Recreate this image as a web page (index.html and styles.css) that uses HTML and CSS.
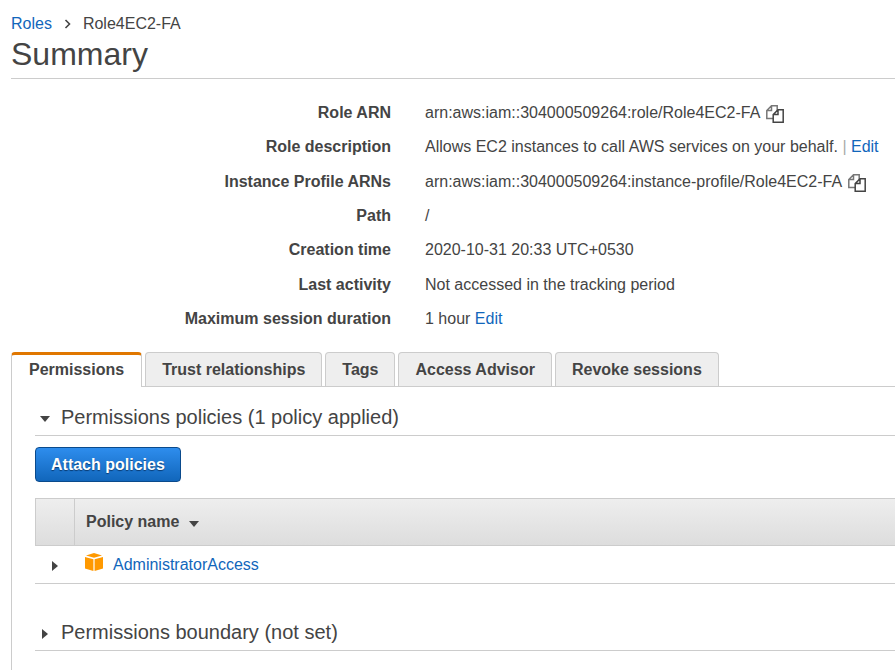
FILE: index.html
```html
<!DOCTYPE html>
<html lang="en">
<head>
<meta charset="utf-8">
<title>Role4EC2-FA</title>
<link rel="stylesheet" href="styles.css">
</head>
<body>
<svg class="defs" aria-hidden="true">
  <symbol id="copy" viewBox="0 0 18 18">
    <path d="M5.5 .8H11.2V13.5H.8V5.5Z M5.5 .8V5.5H.8" fill="#fff" stroke="#777" stroke-width="1.5"/>
    <path d="M12 4.8H17.2V17.2H7.2V9.6Z M12 4.8V9.6H7.2" fill="#fff" stroke="#444" stroke-width="1.5"/>
  </symbol>
</svg>
<header class="page-header">
  <nav class="breadcrumb" aria-label="Breadcrumb">
    <a href="#">Roles</a>
    <svg class="chevron" viewBox="0 0 6 10" aria-hidden="true"><path d="M1 1L5 5L1 9" fill="none" stroke="#444" stroke-width="1.6"/></svg>
    <span>Role4EC2-FA</span>
  </nav>
  <h1>Summary</h1>
</header>
<main>
  <dl class="details">
    <dt>Role ARN</dt>
    <dd>arn:aws:iam::304000509264:role/Role4EC2-FA<button class="copy" aria-label="Copy role ARN"><svg><use href="#copy"/></svg></button></dd>
    <dt>Role description</dt>
    <dd>Allows EC2 instances to call AWS services on your behalf. <span class="bar">|</span> <a href="#">Edit</a></dd>
    <dt>Instance Profile ARNs</dt>
    <dd>arn:aws:iam::304000509264:instance-profile/Role4EC2-FA<button class="copy" aria-label="Copy instance profile ARN"><svg><use href="#copy"/></svg></button></dd>
    <dt>Path</dt>
    <dd>/</dd>
    <dt>Creation time</dt>
    <dd>2020-10-31 20:33 UTC+0530</dd>
    <dt>Last activity</dt>
    <dd>Not accessed in the tracking period</dd>
    <dt>Maximum session duration</dt>
    <dd>1 hour <a href="#">Edit</a></dd>
  </dl>
  <div class="tabs" role="tablist">
    <button class="tab active" role="tab" aria-selected="true">Permissions</button>
    <button class="tab" role="tab">Trust relationships</button>
    <button class="tab" role="tab">Tags</button>
    <button class="tab" role="tab">Access Advisor</button>
    <button class="tab" role="tab">Revoke sessions</button>
  </div>
  <section class="panel">
    <h2><button class="toggle" aria-expanded="true"><i class="caret down"></i>Permissions policies (1 policy applied)</button></h2>
    <button class="primary">Attach policies</button>
    <table class="policies">
      <thead>
        <tr><th class="expander"></th><th>Policy name<i class="caret down sort"></i></th></tr>
      </thead>
      <tbody>
        <tr>
          <td class="expander"><button class="expand" aria-label="Expand AdministratorAccess"><i class="caret right"></i></button></td>
          <td><div class="policy"><svg class="cube" viewBox="0 0 18 18" aria-hidden="true"><path d="M1 2.6L9 0L17 2.6L9 4.8Z M0 4L8.4 6.2V18L0 15.6Z M18 4L9.6 6.2V18L18 15.6Z" fill="#f90"/></svg><a href="#">AdministratorAccess</a></div></td>
        </tr>
      </tbody>
    </table>
    <h2><button class="toggle" aria-expanded="false"><i class="caret right"></i>Permissions boundary (not set)</button></h2>
  </section>
</main>
</body>
</html>
```
FILE: styles.css
```css
* {
  box-sizing: border-box;
}

body {
  margin: 0;
  padding: 13px 0 0 11px;
  background: #fff;
  color: #444;
  font: 16px/22px "Liberation Sans", Arial, sans-serif;
  overflow-x: hidden;
}

button {
  font: inherit;
  color: inherit;
  cursor: pointer;
}

a {
  color: #1166bb;
  text-decoration: none;
}

.defs {
  position: absolute;
  width: 0;
  height: 0;
}

.page-header {
  border-bottom: 1px solid #ccc;
}

.breadcrumb {
  display: flex;
  align-items: center;
  gap: 12px;
}

.chevron {
  width: 7px;
  height: 10px;
}

h1 {
  margin: 0;
  padding-bottom: 4px;
  font-size: 32px;
  line-height: 39px;
  font-weight: normal;
}

.details {
  display: grid;
  grid-template-columns: 380px 1fr;
  grid-auto-rows: 34px 35px 34px;
  column-gap: 34px;
  margin: 17px 0 16px;
  line-height: 34px;
  white-space: nowrap;
}

.details dt {
  font-weight: bold;
  text-align: right;
}

.details dd {
  margin: 0;
}

.bar {
  color: #aaa;
}

.copy {
  width: 18px;
  height: 18px;
  margin-left: 6px;
  padding: 0;
  border: 0;
  background: none;
  vertical-align: -5px;
}

.copy svg {
  display: block;
  width: 18px;
  height: 18px;
}

.tabs {
  display: flex;
  gap: 3px;
  border-bottom: 1px solid #ccc;
}

.tab {
  height: 34px;
  padding: 0 16px;
  border: 1px solid #ccc;
  border-bottom: 0;
  border-radius: 4px 4px 0 0;
  background: #eee;
  font-weight: bold;
}

.tab.active {
  height: 35px;
  margin-bottom: -1px;
  padding: 0 17px 2px;
  border-top: 3px solid #e07700;
  background: #fff;
}

.panel {
  min-height: 283px;
  padding: 12px 0 0 23px;
  border-left: 1px solid #ccc;
}

h2 {
  margin: 0;
  border-bottom: 1px solid #ccc;
  font-size: 20px;
  font-weight: normal;
}

.toggle {
  display: flex;
  align-items: center;
  width: 100%;
  height: 36px;
  padding: 0 0 0 5px;
  border: 0;
  background: none;
  text-align: left;
}

.caret {
  display: inline-block;
  border: 0 solid transparent;
}

.caret.down {
  border-width: 6px 5px 0;
  border-top-color: #444;
}

.caret.right {
  border-width: 5px 0 5px 6px;
  border-left-color: #444;
}

.toggle .caret {
  margin-top: 3px;
  margin-right: 11px;
}

.toggle .caret.right {
  margin-left: 2px;
  margin-right: 13px;
}

.primary {
  display: block;
  height: 35px;
  margin: 11px 0 16px;
  padding: 0 15px;
  border: 1px solid #0a4a8c;
  border-radius: 4px;
  background: linear-gradient(#2e8ded, #1166bb);
  color: #fff;
  font-weight: bold;
  text-shadow: 0 1px 1px #0a3a70;
}

.policies {
  width: 100%;
  margin-bottom: 30px;
  border-spacing: 0;
  text-align: left;
}

.policies th {
  height: 48px;
  padding: 0 11px;
  border: 1px solid #ccc;
  border-right: 0;
  background: linear-gradient(#eee, #ddd);
}

.policies td {
  height: 38px;
  padding: 0 11px;
  border-bottom: 1px solid #ccc;
}

.policies .expander {
  width: 39px;
  padding: 0;
  text-align: center;
}

.sort {
  margin-left: 10px;
}

.expand {
  display: block;
  margin: 2px auto 0;
  padding: 0;
  border: 0;
  background: none;
}

.expand .caret {
  display: block;
}

.policy {
  display: flex;
  align-items: center;
  gap: 10px;
}

.cube {
  width: 18px;
  height: 18px;
  margin-bottom: 6px;
}
```
